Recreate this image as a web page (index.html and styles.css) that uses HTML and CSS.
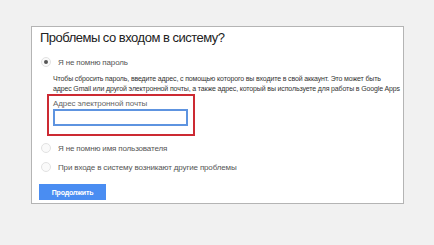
FILE: index.html
```html
<!DOCTYPE html>
<html lang="ru">
<head>
  <meta charset="UTF-8" />
  <title>Проблемы со входом в систему?</title>
  <link rel="stylesheet" href="styles.css">
</head>
<body>

  <div class="card">
    <h1 class="title">Проблемы со входом в систему?</h1>

    <div class="option">
      <span class="radio checked"></span>
      <span class="label">Я не помню пароль</span>
    </div>

    <div class="details">
      <p class="hint">Чтобы сбросить пароль, введите адрес, с помощью которого вы входите в свой аккаунт. Это может быть<br>адрес Gmail или другой электронной почты, а также адрес, который вы используете для работы в Google Apps</p>
      <div class="mark">
        <div class="field-label">Адрес электронной почты</div>
        <input type="text" class="field">
      </div>
    </div>

    <div class="option">
      <span class="radio"></span>
      <span class="label">Я не помню имя пользователя</span>
    </div>

    <div class="option last">
      <span class="radio"></span>
      <span class="label">При входе в систему возникают другие проблемы</span>
    </div>

    <button class="btn">Продолжить</button>
  </div>

</body>
</html>
```

FILE: styles.css
```css
body {
  margin: 0;
  background-color: #f1f1f1;
  font-family: 'Liberation Sans', Arial, sans-serif;
  height: 245px;
  overflow: hidden;
}

.card {
  margin: 26px 0 0 31px;
  width: 356px;
  background-color: #fff;
  border: 1px solid #b4b4b4;
  padding: 2px 7px 3px 8px;
}

.title {
  font-size: 13px;
  letter-spacing: -0.5px;
  font-weight: normal;
  color: #222;
  margin: 0 0 6px;
  line-height: 18px;
}

.option {
  display: flex;
  align-items: center;
  height: 18px;
  margin-left: 1px;
}

.option.last {
  height: 20px;
}

.radio {
  width: 8px;
  height: 8px;
  border-radius: 50%;
  border: 1px solid #e2e2e2;
  background-color: #fafafa;
  margin-right: 7px;
  display: flex;
  align-items: center;
  justify-content: center;
}

.radio.checked::after {
  content: "";
  width: 4px;
  height: 4px;
  border-radius: 50%;
  background-color: #555;
}

.label {
  font-size: 8px;
  letter-spacing: -0.15px;
  color: #555;
}

.details {
  padding-left: 13px;
  margin-bottom: 3px;
}

.hint {
  font-size: 7px;
  letter-spacing: -0.14px;
  line-height: 9.5px;
  color: #333;
  margin: 3px 0 1px;
  white-space: nowrap;
}

.mark {
  margin-left: -6px;
  width: 140px;
  border: 2px solid #cc2a33;
  padding: 3px 0 8px 4px;
}

.field-label {
  font-size: 8px;
  letter-spacing: -0.1px;
  color: #666;
  line-height: 10px;
}

.field {
  display: block;
  box-sizing: border-box;
  width: 135px;
  height: 17px;
  margin: 0;
  border: 2px solid #5e94e0;
  padding: 0;
  background-color: #fff;
}

.btn {
  margin-top: 7px;
  width: 67px;
  height: 16px;
  border: none;
  background-color: #4a8df2;
  color: #fff;
  font-family: 'Liberation Sans', Arial, sans-serif;
  font-size: 7px;
  letter-spacing: -0.2px;
  font-weight: bold;
  padding: 0;
  margin-left: -1px;
}
```
